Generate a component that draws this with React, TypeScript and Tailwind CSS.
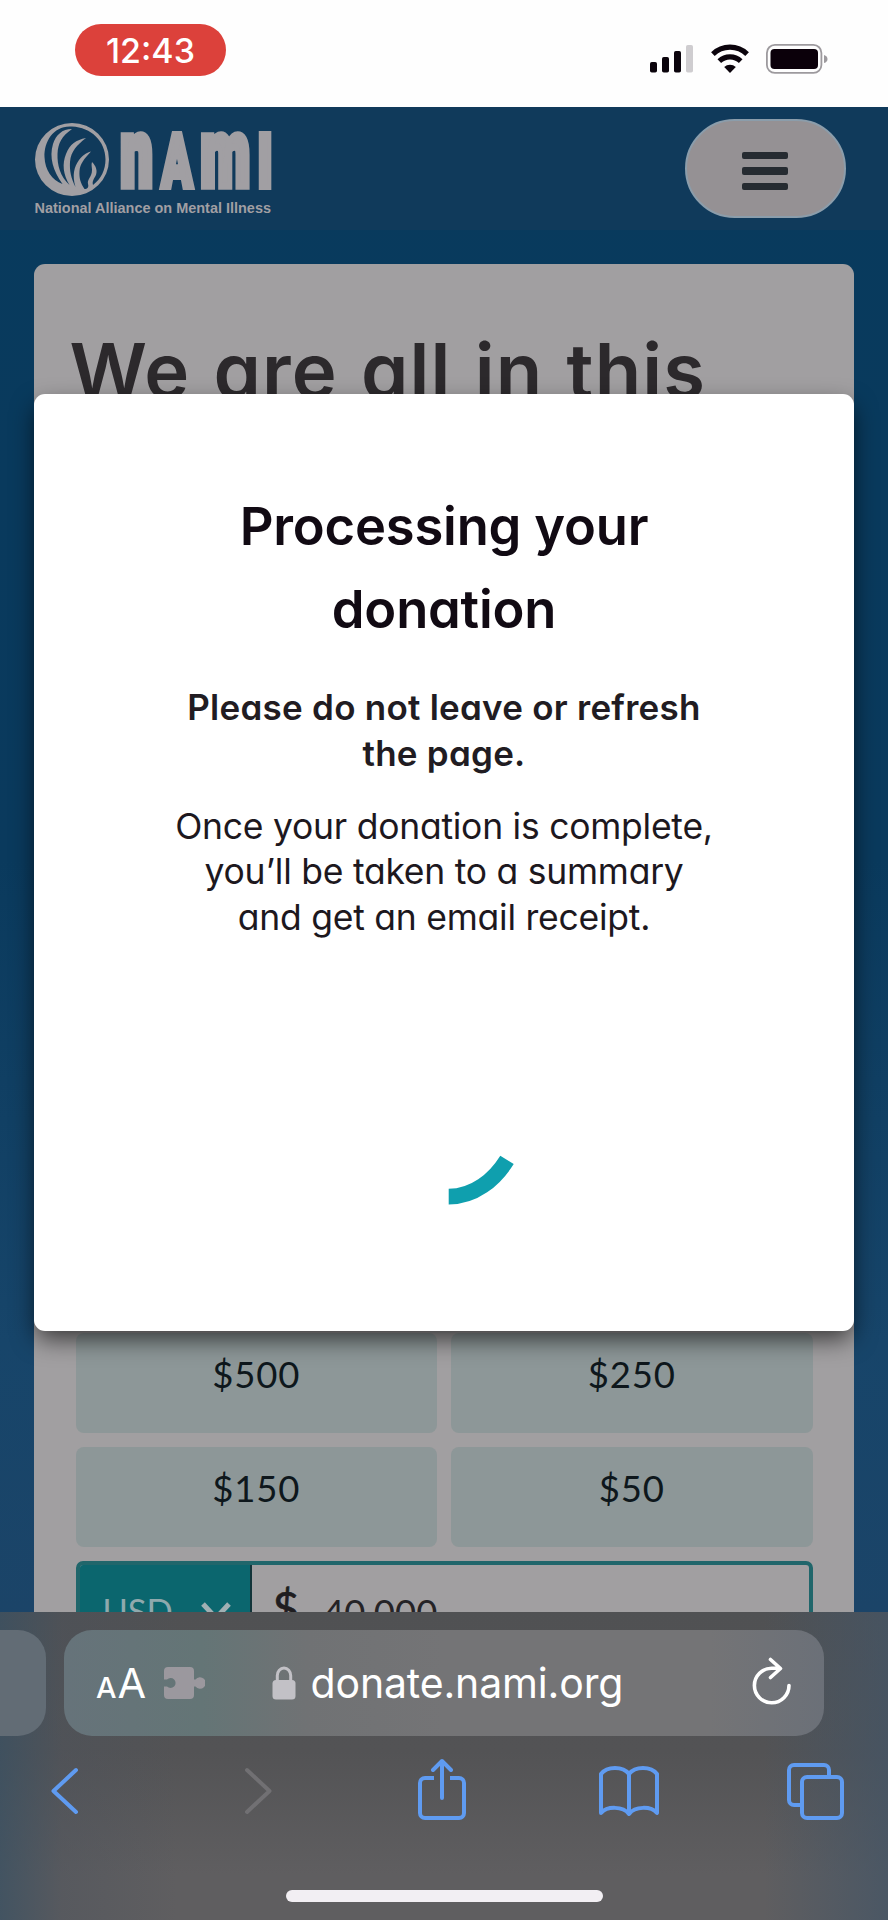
import React from "react";

const amounts = ["$500", "$250", "$150", "$50"];

const muli = "font-['Inter',sans-serif] [font-feature-settings:'cv11'] whitespace-nowrap";

function StatusBar() {
    return (
        <div className="flex h-[107px] shrink-0 items-start bg-[#fefefe] pl-[75px] pr-[59px]">
            <div className="mt-[24px] grid h-[52px] w-[151px] place-items-center rounded-full bg-[#dc413b]">
                <span className="relative top-[1px] font-['Inter',sans-serif] text-[34px] font-medium leading-none text-white">12:43</span>
            </div>
            <div className="ml-auto mt-[44px] flex items-start">
                <svg width="45" height="30" viewBox="0 0 45 30">
                    <rect x="0" y="18" width="7" height="10.5" rx="1.8" fill="#0b040c" />
                    <rect x="12" y="13" width="7" height="15.5" rx="1.8" fill="#0b040c" />
                    <rect x="24" y="7" width="7" height="21.5" rx="1.8" fill="#0b040c" />
                    <rect x="36" y="1" width="7" height="27.5" rx="1.8" fill="#cfcdd0" />
                </svg>
                <svg className="ml-[16px]" width="38" height="30" viewBox="0 0 38 30">
                    <g fill="none" stroke="#0b040c" strokeWidth="5.2">
                        <path d="M1.9 10.1a24.6 24.6 0 0 1 34.2 0" />
                        <path d="M8.3 17.2a15.4 15.4 0 0 1 21.4 0" />
                    </g>
                    <path d="M19 29l-5.8-6a8.4 8.4 0 0 1 11.6 0z" fill="#0b040c" />
                </svg>
                <svg className="ml-[17px]" width="63" height="30" viewBox="0 0 63 30">
                    <rect x="0.9" y="0.9" width="54.5" height="28" rx="8" fill="none" stroke="#9d9a9e" strokeWidth="1.8" />
                    <rect x="4.5" y="5" width="47.5" height="20" rx="4" fill="#0b000a" />
                    <path d="M58 11q3.5 1 3.5 4t-3.5 4z" fill="#9d9a9e" />
                </svg>
            </div>
        </div>
    );
}

function Logo() {
    return (
        <svg className="overflow-visible" width="240" height="94" viewBox="0 0 240 94" fill="#a19fa3">
            <path fillRule="evenodd" d="M38 0a37 36.500 0 1 1 0 73a37 36.500 0 1 1 0-73zM38 3.500C20 2 10 18 10.500 34C11 47 18 57 28.500 61C19 48 15 34 19 21C22 12 28 6 38 6C28 13 24 20 23.500 31C23.200 42 26 53 35.500 62C29 51 28 41 32 31C36 21 42 17 52 15C43 22 37 28 36 39C35.500 48 37 55 41.500 64C38 52 40 44 45 37C49 32 52 30 57 28.500C50 36 46 41 45.500 48C45 55 46.500 60 50.500 66C53.500 66 55 64 54 61C53 56 58 54 58 47C58 44 57 42 58 39C62 43 64 48 61.500 53C60 56 58 58 59 62C67 56 71.500 47 71.500 36.500C71.500 18 57 4.500 38 3.500z" />
            <g fontFamily="Roboto, sans-serif" fontWeight="900" fontSize="100" stroke="#a19fa3" strokeWidth="8" strokeLinejoin="miter" strokeMiterlimit="2">
                <text transform="translate(86.500 63) scale(0.57 0.95)">n</text>
                <text transform="translate(127.600 64) scale(0.455 0.745)">A</text>
                <text transform="translate(166.400 63) scale(0.575 0.95)">m</text>
                <text transform="translate(223.500 64) scale(0.5 0.745)">I</text>
            </g>
            <text x="0.500" y="90" fontFamily="'Liberation Sans', sans-serif" fontWeight="700" fontSize="15" textLength="236.500" lengthAdjust="spacingAndGlyphs">National Alliance on Mental Illness</text>
        </svg>
    );
}

function SiteHeader() {
    return (
        <header className="flex h-[123px] shrink-0 items-start justify-between bg-[#103a5b] pl-[34px] pr-[42px]">
            <div className="mt-[16px]"><Logo /></div>
            <button className="mt-[12px] flex h-[99px] w-[161.500px] flex-col items-center justify-center gap-[8px] rounded-full border-2 border-[#8b9dab] bg-[#959194] pt-[5px]">
                <span className="h-[7.500px] w-[46px] rounded-[2px] bg-[#262b31]" />
                <span className="h-[7.500px] w-[46px] rounded-[2px] bg-[#262b31]" />
                <span className="h-[7.500px] w-[46px] rounded-[2px] bg-[#262b31]" />
            </button>
        </header>
    );
}

function DonationCard() {
    return (
        <main className="mx-[34px] mt-[34px] flex flex-1 flex-col rounded-t-[11px] bg-[#a19fa1] px-[41.500px]">
            <h1 className={`${muli} -ml-[6px] mt-[61px] h-[1008px] text-[76px] font-[640] leading-[90px] tracking-[1.100px] [word-spacing:3px] text-[#2c292c]`}>We are all in this</h1>
            <div className="grid grid-cols-2 gap-x-[14px] gap-y-[14px]">
                {amounts.map((amount) => (
                    <button key={amount} className="h-[100px] rounded-[8px] bg-[#8d9798] pb-[18px] font-['Lato',sans-serif] text-[36.500px] tracking-[0.8px] text-[#0e171c]">{amount}</button>
                ))}
            </div>
            <div className="mt-[14px] flex h-[100px] shrink-0 overflow-hidden rounded-[7px] border-4 border-[#20666b] bg-[#a19fa1]">
                <div className="-ml-[4px] flex w-[176px] shrink-0 border-r-2 border-[#123439] bg-[#0b666e] pl-[27px] pt-[25px]">
                    <span className="font-['Lato',sans-serif] text-[34.500px] leading-[42px] text-[#8fa9ad]">USD</span>
                    <svg className="ml-[27px] mt-[11px]" width="32" height="22" viewBox="0 0 32 22" fill="none" stroke="#a0b0b3" strokeWidth="5">
                        <path d="M3 3l13 14L29 3" />
                    </svg>
                </div>
                <span className="ml-[21px] mt-[16px] font-['Lato',sans-serif] text-[46px] leading-[54px] text-[#1f1d20] [-webkit-text-stroke:0.7px_#1f1d20]">$</span>
                <span className="ml-[24px] mt-[26px] font-['Lato',sans-serif] text-[36.500px] leading-[42px] text-[#252326]">40,000</span>
            </div>
        </main>
    );
}

function ProcessingModal() {
    return (
        <div className="absolute inset-x-[34px] top-[286.500px] flex h-[937px] flex-col items-center rounded-[11px] bg-white text-center shadow-[0_10px_24px_-2px_rgba(0,0,0,0.65)]">
            <h2 className={`${muli} mt-[91.500px] text-[52.500px] font-[640] leading-[82.500px] tracking-[-0.200px] text-[#110a13]`}>
                Processing your
                <br />
                donation
            </h2>
            <p className={`${muli} mt-[35px] text-[35px] font-semibold leading-[45.500px] tracking-[0.250px] text-[#211c22]`}>
                Please do not leave or refresh
                <br />
                the page.
            </p>
            <p className={`${muli} mt-[27.500px] text-[35.500px] font-[370] leading-[45.500px] tracking-[-0.250px] text-[#1d181e]`}>
                Once your donation is complete,
                <br />
                you’ll be taken to a summary
                <br />
                and get an email receipt.
            </p>
            <svg className="mt-[116px] shrink-0" width="154" height="154" viewBox="0 0 154 154" fill="none">
                <path d="M81.700 140.700C107 140.700 127.500 124 140 103.900" stroke="#0f9fae" strokeWidth="15.800" />
            </svg>
        </div>
    );
}

function AddressBar() {
    return (
        <div className="flex h-[106px] justify-between">
            <div className="w-[45.500px] rounded-r-[28px] bg-[#626c75]" />
            <div className="mr-[64px] flex w-[760px] items-center rounded-[28px] bg-[linear-gradient(90deg,#66737a_0%,#647576_18%,#707274_32%,#747476_50%,#747476_85%,#6b7078_100%)] pl-[32px] font-['Inter',sans-serif] text-white">
                <span className="relative top-[1px] flex w-[62px] items-baseline">
                    <span className="text-[29px] font-medium leading-none">A</span>
                    <span className="ml-[1px] text-[41.500px] leading-none">A</span>
                </span>
                <svg className="ml-[5px]" width="42" height="34" viewBox="0 0 42 34" fill="#9b989e">
                    <path d="M5 1h22a4 4 0 0 1 4 4v8.500h1.500a5.700 5.700 0 1 1 0 7H31V29a4 4 0 0 1-4 4H5a4 4 0 0 1-4-4v-8.500h3a5 5 0 1 0 0-7H1V5a4 4 0 0 1 4-4z" />
                </svg>
                <svg className="ml-[66.500px]" width="24" height="34" viewBox="0 0 24 34">
                    <path d="M5.300 15V9.500a6.700 7.500 0 0 1 13.400 0V15" fill="none" stroke="#c2c1c6" strokeWidth="3" />
                    <rect x="0.500" y="14" width="23" height="19.500" rx="3.500" fill="#c2c1c6" />
                </svg>
                <span className="ml-[15px] text-[41px] leading-none tracking-[-0.150px]">donate.nami.org</span>
                <svg className="relative -top-[2px] ml-auto mr-[32px]" width="40" height="50" viewBox="0 0 40 50" fill="none" stroke="white" strokeWidth="3.600" strokeLinecap="round" strokeLinejoin="round">
                    <path d="M37 29.500a17.300 17.300 0 1 1-17.300-17.300H28M18.500 3.500l10 9-10 9" />
                </svg>
            </div>
        </div>
    );
}

function Toolbar() {
    return (
        <div className="mt-[20px] flex h-[68px] items-start pl-[48px] text-[#5f9bf1]">
            <svg width="32" height="68" viewBox="0 0 32 68" fill="none" stroke="currentColor" strokeWidth="4" strokeLinecap="round" strokeLinejoin="round">
                <path d="M28 14L5.500 35 28 56" />
            </svg>
            <svg className="ml-[163px]" width="32" height="68" viewBox="0 0 32 68" fill="none" stroke="#717073" strokeWidth="4" strokeLinecap="round" strokeLinejoin="round">
                <path d="M4 14l22.500 21L4 56" />
            </svg>
            <svg className="ml-[141px]" width="52" height="68" viewBox="0 0 52 68" fill="none" stroke="currentColor" strokeWidth="4" strokeLinejoin="round">
                <path d="M18 22H9a5 5 0 0 0-5 5v30a5 5 0 0 0 5 5h34a5 5 0 0 0 5-5V27a5 5 0 0 0-5-5h-9" />
                <path d="M26 42V5M17 14l9-9 9 9" strokeLinecap="round" />
            </svg>
            <svg className="ml-[128px]" width="66" height="68" viewBox="0 0 66 68" fill="none" stroke="currentColor" strokeWidth="4" strokeLinejoin="round">
                <path d="M33 58V18C27 10 11 10 5 18V57C11 50 27 50 33 58C39 50 55 50 61 57V18C55 10 39 10 33 18" />
            </svg>
            <svg className="ml-[123px]" width="60" height="68" viewBox="0 0 60 68" fill="none" stroke="currentColor" strokeWidth="4">
                <path d="M17 49H9a5 5 0 0 1-5-5V14a5 5 0 0 1 5-5h30a5 5 0 0 1 5 5v7" />
                <rect x="17" y="21" width="40" height="41" rx="5" />
            </svg>
        </div>
    );
}

function BrowserBar() {
    return (
        <footer className="flex h-[308px] shrink-0 flex-col bg-[linear-gradient(90deg,rgba(57,80,98,0.75)_0%,rgba(75,82,92,0.4)_7%,rgba(84,84,86,0)_20%,rgba(84,84,86,0)_86%,rgba(66,84,102,0.7)_100%),linear-gradient(180deg,#505153_0%,#535355_45%,#5f5e60_85%,#5f5e60_100%)] pt-[18px]">
            <AddressBar />
            <Toolbar />
            <div className="mx-auto mt-auto mb-[18px] h-[12px] w-[317px] rounded-full bg-[#f2eff3]" />
        </footer>
    );
}

export default function App() {
    return (
        <div className="flex h-[1920px] w-[888px] flex-col overflow-hidden">
            <StatusBar />
            <div className="relative flex h-[1505px] shrink-0 flex-col overflow-hidden bg-[linear-gradient(180deg,#083a5d_0%,#0a3a5d_50%,#17456a_82%,#1b4468_100%)]">
                <SiteHeader />
                <DonationCard />
                <ProcessingModal />
            </div>
            <BrowserBar />
        </div>
    );
}
